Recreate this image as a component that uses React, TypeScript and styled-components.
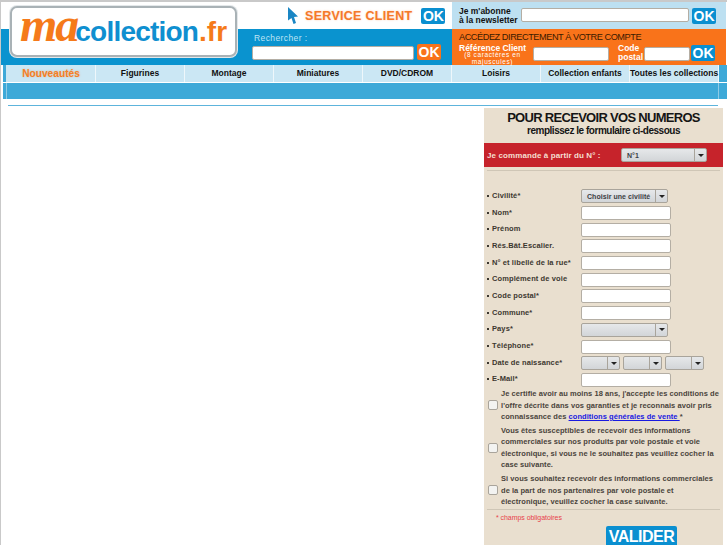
import React from "react";
import styled, { createGlobalStyle } from "styled-components";

const GlobalStyle = createGlobalStyle`
  html, body {
    margin: 0;
    padding: 0;
    background: #fff;
    font-family: "Liberation Sans", Arial, sans-serif;
  }
`;

const Page = styled.div`
  width: 727px;
  height: 545px;
  overflow: hidden;
  box-sizing: border-box;
  background: #fff;
  border-top: 2px solid #c9c9c9;
  border-left: 1px solid #c9c9c9;
`;

const Header = styled.header`
  display: grid;
  grid-template-columns: 250px 201px 274px;
  height: 63px;
`;

const LogoCol = styled.div`
  background: linear-gradient(#fff 27px, #0a93cf 27px);
  padding: 4px 0 0 9px;
`;

const LogoCard = styled.div`
  box-sizing: border-box;
  width: 227px;
  height: 51px;
  background: #fff;
  border: 2px solid #a9b2b6;
  border-radius: 7px;
  box-shadow: 0 0 0 1px #e4e8ea;
  display: flex;
  align-items: baseline;
  padding: 0 0 0 8px;
  font-size: 28px;
  line-height: 30px;
  letter-spacing: -0.8px;
  font-weight: bold;
  color: #0f8fd0;
  white-space: nowrap;
`;

const LogoMa = styled.span`
  font-family: "Liberation Serif", serif;
  font-style: italic;
  font-weight: bold;
  font-size: 48px;
  line-height: 34px;
  letter-spacing: -2px;
  color: #f57a1a;
  margin-right: -2px;
`;

const LogoTld = styled.span`
  color: #f57a1a;
  font-size: 28px;
  letter-spacing: 0;
  margin-left: 1px;
`;

const ServiceCol = styled.div`
  display: grid;
  grid-template-rows: 27px 36px;
`;

const ServiceRow = styled.div`
  display: flex;
  align-items: center;
  padding-left: 37px;
  background: #fff;
  color: #f5792a;
  font-size: 12.5px;
  font-weight: bold;
  letter-spacing: 0.3px;
  text-shadow: 0 0 2px rgba(245, 121, 42, 0.4);
  svg {
    margin-right: 7px;
  }
  span {
    margin-right: 9px;
    white-space: nowrap;
  }
`;

const SearchBox = styled.div`
  background: #0a93cf;
  padding: 3px 0 0 1px;
  color: #bfe3f4;
  font-size: 8.5px;
  letter-spacing: 0.4px;
`;

const SearchLabel = styled.div`
  padding-left: 2px;
  height: 12px;
  line-height: 12px;
`;

const InlineRow = styled.div`
  display: flex;
  align-items: flex-end;
  gap: 3px;
`;

const TextBox = styled.div<{ $w: number; $h?: number }>`
  box-sizing: border-box;
  width: ${(p) => p.$w}px;
  height: ${(p) => p.$h ?? 14}px;
  background: #fff;
  border: 1px solid #b4aea4;
  border-radius: 2px;
  flex: none;
`;

const OkButton = styled.div<{ $orange?: boolean }>`
  flex: none;
  width: 24px;
  height: 16px;
  border-radius: 2px;
  background: ${(p) => (p.$orange ? "#f9731a" : "#0a8fd0")};
  color: #fff;
  font-size: 14px;
  font-weight: bold;
  letter-spacing: 0;
  line-height: 16px;
  text-align: center;
  text-shadow: none;
`;

const AccountCol = styled.div`
  display: grid;
  grid-template-rows: 27px 36px;
`;

const NewsletterRow = styled.div`
  display: flex;
  align-items: center;
  background: #bde0f1;
  padding-left: 7px;
  font-size: 8.5px;
  font-weight: bold;
  line-height: 9px;
  color: #111;
`;

const NewsletterLabel = styled.div`
  width: 62px;
  white-space: nowrap;
`;

const NewsletterField = styled.div`
  display: flex;
  align-items: flex-start;
  gap: 3px;
`;

const OrangeBox = styled.div`
  background: #f9731a;
  padding: 3px 0 0 7px;
  color: #fff;
`;

const OrangeTitle = styled.div`
  color: #3a1a00;
  font-size: 9.2px;
  line-height: 11px;
  letter-spacing: -0.45px;
  white-space: nowrap;
`;

const OrangeRow = styled.div`
  display: flex;
  align-items: flex-start;
  margin-top: 1px;
`;

const RefLabel = styled.div`
  width: 67px;
  text-align: center;
  font-size: 8.5px;
  font-weight: bold;
  line-height: 8px;
  white-space: nowrap;
  margin-right: 7px;
  small {
    display: block;
    font-size: 6.5px;
    font-weight: normal;
    line-height: 6.5px;
    letter-spacing: 0.6px;
  }
`;

const PostalLabel = styled.div`
  width: 26px;
  margin-left: 9px;
  font-size: 8.5px;
  font-weight: bold;
  line-height: 9px;
`;

const OrangeInputs = styled.div`
  height: 17px;
  display: flex;
  align-items: flex-end;
  gap: 1px;
`;

const Nav = styled.nav`
  display: flex;
  height: 17px;
  background: #cbe7f4;
  border-left: 2px solid #fff;
  border-bottom: 1px solid #fff;
`;

const NavStripe = styled.div`
  width: 3px;
  background: #3ea9d8;
  flex: none;
  border-right: 1px solid #cbe7f4;
`;

const NavItem = styled.div<{ $active?: boolean; $w: number }>`
  box-sizing: border-box;
  width: ${(p) => p.$w}px;
  flex: none;
  border-right: 1px solid #eef7fb;
  text-align: center;
  font-size: ${(p) => (p.$active ? 10.2 : 8.5)}px;
  font-weight: bold;
  line-height: 17px;
  white-space: nowrap;
  color: ${(p) => (p.$active ? "#f47f24" : "#111")};
  text-shadow: ${(p) => (p.$active ? "0 0 2px rgba(245, 121, 42, 0.4)" : "none")};
`;

const NavEnd = styled.div`
  flex: 1;
  background: #3ea9d8;
`;

const SubBar = styled.div`
  display: flex;
  height: 16px;
  background: #3ea9d8;
  border-left: 2px solid #fff;
`;

const SubBarMiddle = styled.div`
  box-sizing: border-box;
  width: 713px;
  margin-left: 3px;
  border-left: 1px solid #8fcbe6;
  border-right: 1px solid #8fcbe6;
`;

const Rule = styled.div`
  height: 1px;
  margin: 6px 9px 0 7px;
  background: #5db4dc;
`;

const Main = styled.main`
  display: flex;
  justify-content: flex-end;
  padding: 2px 4px 0 0;
`;

const Panel = styled.section`
  box-sizing: border-box;
  width: 239px;
  height: 440px;
  background: #e9dfcf;
`;

const PanelTitle = styled.h1`
  margin: 0;
  padding-top: 2px;
  font-size: 13px;
  line-height: 15px;
  font-weight: bold;
  letter-spacing: -0.7px;
  text-align: center;
  color: #151515;
`;

const PanelSubtitle = styled.h2`
  margin: 0;
  font-size: 10px;
  line-height: 12px;
  font-weight: bold;
  letter-spacing: -0.47px;
  text-align: center;
  color: #151515;
`;

const RedBand = styled.div`
  display: flex;
  align-items: center;
  height: 24px;
  margin-top: 6px;
  padding-left: 3px;
  background: #c6232b;
  color: #f5ded0;
  font-size: 8px;
  font-weight: bold;
  letter-spacing: 0.1px;
  white-space: nowrap;
`;

const RedLabel = styled.div`
  width: 134px;
`;

const Divider = styled.div`
  height: 1px;
  background: #cfc6b6;
  margin: 0 3px;
`;

const FirstDivider = styled(Divider)`
  margin-top: 3px;
`;

const Fields = styled.div`
  display: flex;
  flex-direction: column;
  padding: 17px 0 0 3px;
`;

const FieldRow = styled.div`
  display: flex;
  align-items: center;
  height: 16.7px;
`;

const FieldLabel = styled.div`
  width: 94px;
  padding-bottom: 2px;
  box-sizing: border-box;
  font-size: 7.5px;
  font-weight: bold;
  letter-spacing: 0.1px;
  color: #3c3730;
  white-space: nowrap;
  &::before {
    content: "";
    display: inline-block;
    width: 2px;
    height: 2px;
    margin-right: 3px;
    vertical-align: middle;
    background: #3c3730;
  }
`;

const SelectBox = styled.div<{ $w: number }>`
  box-sizing: border-box;
  width: ${(p) => p.$w}px;
  height: 14px;
  flex: none;
  display: flex;
  align-items: center;
  border: 1px solid #a9a49b;
  border-radius: 2px;
  background: linear-gradient(#e6e8ea, #d2d5d8);
  font-size: 7px;
  font-weight: bold;
  letter-spacing: 0.05px;
  color: #3c4044;
  white-space: nowrap;
`;

const SelectText = styled.div`
  flex: 1;
  padding-left: 5px;
  overflow: hidden;
`;

const SelectArrow = styled.div`
  flex: none;
  width: 11px;
  height: 100%;
  border-left: 1px solid #a9a49b;
  display: flex;
  align-items: center;
  justify-content: center;
  &::after {
    content: "";
    border-top: 3px solid #222;
    border-left: 3px solid transparent;
    border-right: 3px solid transparent;
  }
`;

const DateGroup = styled.div`
  display: flex;
  gap: 3px;
`;

const Consents = styled.div`
  display: flex;
  flex-direction: column;
  gap: 3px;
  padding: 0 3px 0 4px;
`;

const ConsentRow = styled.div`
  display: flex;
  align-items: center;
`;

const CheckBox = styled.div`
  box-sizing: border-box;
  width: 10px;
  height: 10px;
  flex: none;
  margin-right: 3px;
  background: #f3f3f1;
  border: 1px solid #a9a49b;
  border-radius: 2px;
`;

const ConsentText = styled.p`
  margin: 0;
  font-size: 7.5px;
  font-weight: bold;
  line-height: 11.3px;
  letter-spacing: 0.05px;
  color: #4a443c;
  white-space: nowrap;
  a {
    color: #1a1ae0;
    text-decoration: underline;
  }
`;

const FootRule = styled(Divider)`
  margin-top: 2px;
`;

const Required = styled.div`
  margin: 3px 0 0 12px;
  color: #e8414a;
  font-size: 7px;
  letter-spacing: -0.05px;
  line-height: 10px;
`;

const SubmitWrap = styled.div`
  display: flex;
  justify-content: flex-end;
  padding: 3px 46px 0 0;
`;

const SubmitButton = styled.div`
  width: 71px;
  height: 21px;
  border-radius: 2px;
  background: #0a8fd0;
  color: #fff;
  font-size: 16px;
  font-weight: bold;
  letter-spacing: -0.5px;
  line-height: 21px;
  text-align: center;
`;

const navItems = [
  "Nouveautés",
  "Figurines",
  "Montage",
  "Miniatures",
  "DVD/CDROM",
  "Loisirs",
  "Collection enfants",
  "Toutes les collections",
];

const textFields1 = ["Nom*", "Prénom", "Rés.Bât.Escalier.", "N° et libellé de la rue*", "Complément de voie", "Code postal*", "Commune*"];

const Select = ({ w, text }: { w: number; text?: string }) => (
  <SelectBox $w={w}>
    <SelectText>{text}</SelectText>
    <SelectArrow />
  </SelectBox>
);

const App = () => {
  return (
    <Page>
      <GlobalStyle />
      <Header>
        <LogoCol>
          <LogoCard>
            <LogoMa>ma</LogoMa>
            collection
            <LogoTld>.fr</LogoTld>
          </LogoCard>
        </LogoCol>
        <ServiceCol>
          <ServiceRow>
            <svg width="10" height="17" viewBox="0 0 10 17">
              <path d="M0 0 L10 9.5 L6 10 L8 16 L5.5 17 L3.5 11 L0 13.5 Z" fill="#1a86c4" />
            </svg>
            <span>SERVICE CLIENT</span>
            <OkButton>OK</OkButton>
          </ServiceRow>
          <SearchBox>
            <SearchLabel>Rechercher :</SearchLabel>
            <InlineRow>
              <TextBox $w={162} />
              <OkButton $orange>OK</OkButton>
            </InlineRow>
          </SearchBox>
        </ServiceCol>
        <AccountCol>
          <NewsletterRow>
            <NewsletterLabel>
              Je m'abonne
              <br />à la newsletter
            </NewsletterLabel>
            <NewsletterField>
              <TextBox $w={168} />
              <OkButton>OK</OkButton>
            </NewsletterField>
          </NewsletterRow>
          <OrangeBox>
            <OrangeTitle>ACCÉDEZ DIRECTEMENT À VOTRE COMPTE</OrangeTitle>
            <OrangeRow>
              <RefLabel>
                Référence Client
                <small>(8 caractères en</small>
                <small>majuscules)</small>
              </RefLabel>
              <OrangeInputs>
                <TextBox $w={76} />
              </OrangeInputs>
              <PostalLabel>
                Code
                <br />
                postal
              </PostalLabel>
              <OrangeInputs>
                <TextBox $w={46} />
                <OkButton>OK</OkButton>
              </OrangeInputs>
            </OrangeRow>
          </OrangeBox>
        </AccountCol>
      </Header>
      <Nav>
        <NavStripe />
        {navItems.map((item, i) => (
          <NavItem key={item} $active={i === 0} $w={89}>
            {item}
          </NavItem>
        ))}
        <NavEnd />
      </Nav>
      <SubBar>
        <SubBarMiddle />
      </SubBar>
      <Rule />
      <Main>
        <Panel>
          <PanelTitle>POUR RECEVOIR VOS NUMEROS</PanelTitle>
          <PanelSubtitle>remplissez le formulaire ci-dessous</PanelSubtitle>
          <RedBand>
            <RedLabel>Je commande à partir du N° :</RedLabel>
            <Select w={86} text="N°1" />
          </RedBand>
          <FirstDivider />
          <Fields>
            <FieldRow>
              <FieldLabel>Civilité*</FieldLabel>
              <Select w={87} text="Choisir une civilité" />
            </FieldRow>
            {textFields1.map((label) => (
              <FieldRow key={label}>
                <FieldLabel>{label}</FieldLabel>
                <TextBox $w={90} />
              </FieldRow>
            ))}
            <FieldRow>
              <FieldLabel>Pays*</FieldLabel>
              <Select w={87} />
            </FieldRow>
            <FieldRow>
              <FieldLabel>Téléphone*</FieldLabel>
              <TextBox $w={90} />
            </FieldRow>
            <FieldRow>
              <FieldLabel>Date de naissance*</FieldLabel>
              <DateGroup>
                <Select w={39} />
                <Select w={39} />
                <Select w={39} />
              </DateGroup>
            </FieldRow>
            <FieldRow>
              <FieldLabel>E-Mail*</FieldLabel>
              <TextBox $w={90} />
            </FieldRow>
          </Fields>
          <Consents>
            <ConsentRow>
              <CheckBox />
              <ConsentText>
                Je certifie avoir au moins 18 ans, j'accepte les conditions de
                <br />
                l'offre décrite dans vos garanties et je reconnais avoir pris
                <br />
                connaissance des <a href="#conditions">conditions générales de vente </a>*
              </ConsentText>
            </ConsentRow>
            <ConsentRow>
              <CheckBox />
              <ConsentText>
                Vous êtes susceptibles de recevoir des informations
                <br />
                commerciales sur nos produits par voie postale et voie
                <br />
                électronique, si vous ne le souhaitez pas veuillez cocher la
                <br />
                case suivante.
              </ConsentText>
            </ConsentRow>
            <ConsentRow>
              <CheckBox />
              <ConsentText>
                Si vous souhaitez recevoir des informations commerciales
                <br />
                de la part de nos partenaires par voie postale et
                <br />
                électronique, veuillez cocher la case suivante.
              </ConsentText>
            </ConsentRow>
          </Consents>
          <FootRule />
          <Required>* champs obligatoires</Required>
          <SubmitWrap>
            <SubmitButton>VALIDER</SubmitButton>
          </SubmitWrap>
        </Panel>
      </Main>
    </Page>
  );
};

export default App;
